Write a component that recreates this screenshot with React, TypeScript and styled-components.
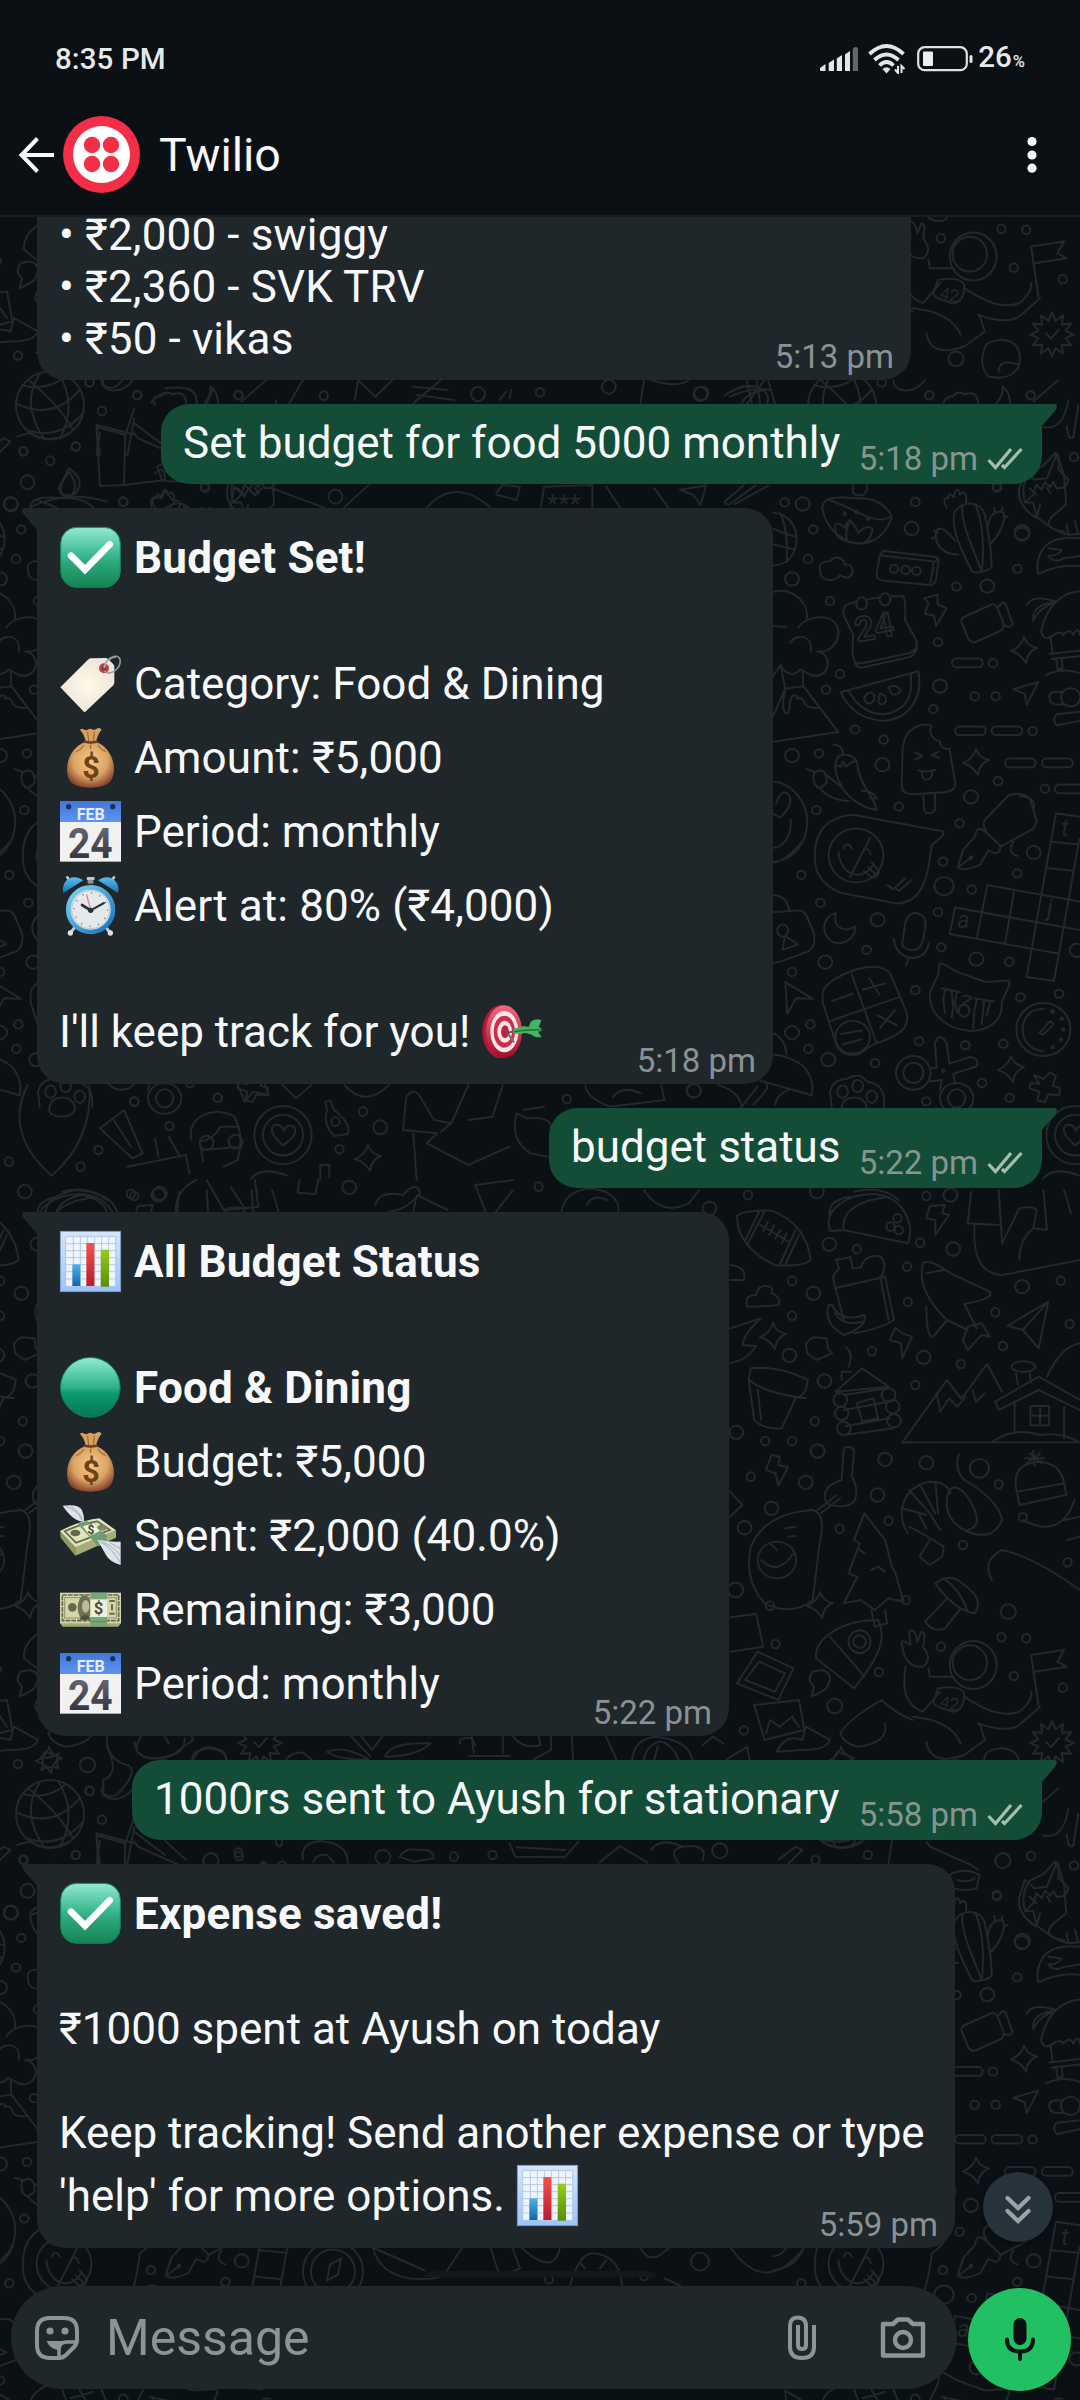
import React from 'react';
import styled, { createGlobalStyle } from 'styled-components';

const C = {
  bg: '#0b1014',
  bubble: '#1f272a',
  sent: '#144d37',
  text: '#f7f8fa',
  muted: '#8b9295',
  doodle: '#22282c',
  green: '#21c063',
};

const GlobalStyle = createGlobalStyle`
  html, body { margin: 0; padding: 0; background: ${C.bg}; }
  * { box-sizing: border-box; }
  text { font-family: Roboto, "Noto Sans", sans-serif; }
`;

const Screen = styled.div`
  position: relative;
  width: 1080px;
  height: 2400px;
  overflow: hidden;
  display: flex;
  flex-direction: column;
  background: ${C.bg};
  color: ${C.text};
  font-family: Roboto, "Noto Sans", sans-serif;
`;

const WallpaperSvg = styled.svg`
  position: absolute;
  inset: 0;
  width: 1080px;
  height: 2400px;
`;

const Top = styled.header`
  position: relative;
  flex: none;
  height: 217px;
  background: ${C.bg};
  border-bottom: 2px solid #171d21;
`;

const StatusBar = styled.div`
  display: flex;
  align-items: center;
  justify-content: space-between;
  height: 92px;
  padding: 25px 55px 0 55px;
  font-size: 29.5px;
  font-weight: 500;
  color: #e6e9ea;
`;

const Clock = styled.span`
  letter-spacing: 0.1px;
`;

const StatusIcons = styled.div`
  display: flex;
  align-items: center;
  gap: 10.5px;
`;

const Percent = styled.span`
  margin: 2px 0 0 -5px;
  line-height: 34px;
`;

const PercentSign = styled.small`
  margin-left: 1px;
  font-size: 16.5px;
`;

const AppBar = styled.div`
  display: flex;
  align-items: center;
  height: 125px;
  padding: 0 18px 0 18px;
`;

const Avatar = styled.svg`
  margin-left: 7px;
  flex: none;
`;

const Title = styled.h1`
  flex: 1;
  margin: 0 0 0 19px;
  font-size: 46.5px;
  font-weight: 400;
  line-height: 54px;
`;

const Chat = styled.main`
  position: relative;
  flex: 1;
  min-height: 0;
  overflow: hidden;
  display: flex;
  flex-direction: column;
  justify-content: flex-end;
  gap: 24px;
  padding: 0 38px 38px 37px;
`;

const Received = styled.section<{ $w: number; $continued?: boolean }>`
  position: relative;
  flex: none;
  display: flex;
  flex-direction: column;
  width: ${(p) => p.$w}px;
  padding: ${(p) => (p.$continued ? 0 : 13)}px 17px 4px 22px;
  background: ${C.bubble};
  border-radius: ${(p) => (p.$continued ? '0 0 28px 28px' : '0 28px 28px 28px')};
`;

const Sent = styled.section<{ $w: number }>`
  position: relative;
  flex: none;
  align-self: flex-end;
  display: flex;
  align-items: flex-end;
  justify-content: space-between;
  width: ${(p) => p.$w}px;
  height: 80px;
  padding: 13px 19px 15px 22px;
  background: ${C.sent};
  border-radius: 28px 0 28px 28px;
`;

const Tail = styled.svg<{ $side: 'left' | 'right' }>`
  position: absolute;
  top: 0;
  ${(p) => p.$side}: -15px;
  ${(p) => (p.$side === 'right' ? 'transform: scaleX(-1);' : '')}
`;

const Line = styled.div<{ $tall?: boolean; $bold?: boolean; $track?: number }>`
  height: ${(p) => (p.$tall ? 74 : 52)}px;
  font-size: 44px;
  line-height: ${(p) => (p.$tall ? 74 : 52)}px;
  font-weight: ${(p) => (p.$bold ? 700 : 400)};
  letter-spacing: ${(p) => p.$track ?? (p.$bold ? 0.16 : 0)}px;
  white-space: pre;
`;

const TopLine = styled(Line)`
  height: 44px;
  line-height: 36px;
`;

const Time = styled.time`
  align-self: flex-end;
  margin-top: -27px;
  font-size: 33px;
  line-height: 38px;
  color: ${C.muted};
`;

const Meta = styled.div`
  display: flex;
  align-items: center;
  gap: 9px;
  height: 38px;
  margin-bottom: -9px;
  font-size: 33px;
  line-height: 38px;
  color: #87958f;
`;

const EmojiBox = styled.svg`
  display: inline-block;
  width: 61px;
  height: 61px;
  margin: 0 2px 0 1px;
  vertical-align: -15px;
  overflow: visible;
`;

const DatePeek = styled.div`
  position: absolute;
  left: 424px;
  bottom: 9px;
  width: 232px;
  height: 6px;
  border-radius: 14px 14px 0 0 / 6px 6px 0 0;
  background: #12181b;
`;

const ScrollDown = styled.button`
  position: absolute;
  right: 27px;
  bottom: 44px;
  display: flex;
  align-items: center;
  justify-content: center;
  width: 70px;
  height: 70px;
  padding: 3px 0 0;
  border: 0;
  border-radius: 50%;
  background: #27333a;
  box-shadow: 0 2px 4px rgba(0, 0, 0, 0.4);
`;

const Composer = styled.footer`
  position: relative;
  flex: none;
  display: flex;
  align-items: flex-start;
  gap: 11px;
  height: 114px;
  padding: 0 9px 0 11px;
`;

const Field = styled.div`
  flex: 1;
  display: flex;
  align-items: center;
  height: 103px;
  padding: 1px 30px 0 22px;
  border-radius: 52px;
  background: ${C.bubble};
  color: #8b9598;
`;

const Placeholder = styled.span`
  flex: 1;
  margin-left: 25px;
  font-size: 50px;
  line-height: 58px;
`;

const Clip = styled.svg`
  margin-right: 61px;
`;

const MicButton = styled.button`
  flex: none;
  display: flex;
  align-items: center;
  justify-content: center;
  width: 103px;
  height: 103px;
  margin-top: 2px;
  padding: 0;
  border: 0;
  border-radius: 50%;
  background: ${C.green};
`;

/* ---------- wallpaper ---------- */

type Dot = [number, number];

const Dots = ({ at, rx, ry }: { at: Dot[]; rx: number; ry: number }) => (
  <>
    {at.map(([x, y]) => (
      <ellipse key={`${x}-${y}`} cx={x} cy={y} rx={rx} ry={ry} />
    ))}
  </>
);

const Spark = ({ x, y }: { x: number; y: number }) => (
  <path
    d={`M${x} ${y - 13}Q${x + 3} ${y - 4} ${x + 13} ${y - 2}Q${x + 3} ${y + 2} ${x + 2} ${y + 13}Q${x - 3} ${y + 4} ${x - 13} ${y + 1}Q${x - 3} ${y - 3} ${x} ${y - 13}Z`}
  />
);

const burst = (cx: number, cy: number) =>
  Array.from({ length: 24 }, (_, i) => {
    const r = i % 2 ? 14 : 22;
    const a = (i * Math.PI) / 12;
    return `${(cx + r * Math.cos(a)).toFixed(1)},${(cy + r * Math.sin(a)).toFixed(1)}`;
  }).join(' ');

const EAST = [
  'M427 250C427 225 500 230 532 232C600 228 640 262 634 272C610 315 560 325 510 318C450 300 430 270 427 250ZM438 234C500 240 580 290 632 268M468 300C460 280 470 275 495 290C500 280 510 270 515 278C525 285 535 300 535 300C560 280 580 290 577 295C570 320 540 325 515 318C490 315 470 310 468 300M500 312C495 295 505 280 515 278',
  'M518 215C518 200 535 190 543 180C560 195 570 215 550 225C530 228 518 225 518 215Z',
  'M420 372C415 355 440 355 452 355C460 345 490 345 495 362C520 360 525 380 505 387C490 388 480 382 480 382C470 395 435 395 425 385C418 380 420 375 420 372Z',
  'M822 262C840 235 905 235 915 265C925 300 935 330 935 365Q933 372 905 376Q880 380 875 374C850 340 815 300 822 262ZM848 246C840 280 880 330 905 376M885 243C905 270 915 320 905 376M835 342C790 342 765 325 767 300C775 285 790 288 826 315M922 290C930 260 950 255 970 260C980 280 950 310 930 322M800 250C785 232 800 228 805 232C805 218 815 225 822 230C825 210 838 212 840 225C850 215 862 222 858 240M755 310L770 308M762 295L772 300M945 258L942 250M965 258L967 250M983 268L972 268',
  'M612 335L770 347Q778 349 775 358L768 392Q763 402 750 402L605 393Q588 390 590 378L598 350Q600 338 612 335ZM602 344L755 355Q762 356 760 365L750 400M760 358L775 350',
  'M530 434L500 440Q485 450 492 462L520 500Q515 540 522 548Q525 557 545 555L690 535Q712 530 710 515L705 505L675 470Q678 430 670 424L635 424M562 430L600 426M522 548Q530 568 550 563L690 543Q715 535 710 515',
  'M733 428L772 421L773 440L800 447L768 482L762 462L735 458L745 437Z',
  'M850 465L935 440Q945 437 952 447L970 475Q972 490 960 492L885 514Q870 516 862 503L845 475Q843 467 850 465ZM952 447L968 436Q978 437 980 445L998 478Q990 488 970 480',
  'M1040 442C1050 425 1090 425 1130 435C1100 440 1070 455 1060 472C1055 450 1080 438 1130 435M1085 490C1100 440 1150 415 1200 414M1082 490Q1090 515 1120 500Q1140 490 1150 500Q1170 485 1180 500Q1195 480 1200 500M1112 505L1118 537M1108 537L1200 530M1115 547L1200 541M1128 546L1133 567L1148 565L1145 545M1098 578Q1150 562 1200 575',
  'M482 612L715 571C730 620 690 665 610 668C550 665 510 650 482 612ZM505 608C530 640 570 655 610 655C680 650 700 620 692 576',
  'M553 622Q570 605 583 618Q585 634 565 634Q550 630 553 622ZM600 614Q622 618 618 630Q605 642 595 630ZM625 602Q650 595 662 609Q650 620 635 615Z',
  'M1000 606L1075 592L1040 636L1034 615ZM316 1180L398 1213L348 1212L322 1242ZM0 215L78 207L62 245L40 225Z',
  'M135 238L190 207M150 243L225 207M135 238Q135 245 150 243M165 243L265 207',
  'M1148 612Q1105 608 1108 622Q1110 640 1150 635M1200 650L1130 655Q1115 665 1130 677L1200 668',
  'M280 260C330 262 350 290 350 312C348 345 320 362 280 364M280 292L348 308M280 322L342 332M300 261Q325 290 320 357',
  'M280 415C340 405 390 440 380 470M280 482L318 484M355 486C370 465 460 450 475 490C478 515 450 535 412 532M330 515C350 495 400 500 392 532M412 532C450 535 455 570 420 578C400 583 385 575 360 567C345 580 315 580 302 558L280 580',
  'M302 558L315 605L280 658M315 605L370 600L475 690L280 709M370 600L368 570M315 607C300 650 320 665 328 645C330 610 350 615 352 625Q365 618 375 635Q385 645 418 642',
  'M460 715Q490 715 488 735M465 755Q470 735 488 735Q515 732 530 748L518 748L498 758L490 748L482 758L470 755M465 755C470 800 520 835 590 843C580 810 540 800 530 748M380 763L405 768M402 770Q440 755 440 790L420 800Q395 795 402 770M420 800C450 825 500 825 505 825M440 775L480 795M545 805Q580 805 590 820L570 820',
  'M665 795L668 720C675 680 730 670 755 678C745 690 755 705 780 708C780 720 795 725 808 722L826 790C826 805 810 808 790 808L700 812Q665 812 665 795ZM730 812L732 840Q735 852 755 848Q767 845 766 835L764 810M705 730L727 737L707 744M777 728L755 735L777 741M715 765Q740 770 765 764M725 768C725 790 757 788 757 767',
  'M405 940C400 880 450 855 520 852L775 883Q800 884 785 895L755 912C745 970 730 1025 650 1026L480 1005C430 990 405 970 405 940ZM475 925C485 980 560 980 580 948M490 918Q503 902 515 918M545 930Q560 908 572 930M552 962L575 975Q595 975 597 962L575 945M565 955L585 968M622 990L640 998L675 977M650 998L658 1001L694 980',
  'M833 955L850 920L885 895Q890 870 915 885L960 912Q965 925 945 928L925 922L900 950Q850 965 833 955ZM835 955L875 935M915 862L985 815Q1020 805 1050 820L1070 865L1060 880L960 915M915 862Q905 875 920 885M1020 815Q1070 820 1062 838M1000 905Q980 925 1012 933',
  'M1128 849L1200 856M1128 849L1040 1170L1122 1178L1198 900M1116 905L1192 910M1104 957L1180 962M922 990L1200 1022M922 990L890 1095M825 1034L1200 1078M825 1034L809 1086L1135 1124M1003 1000L975 1105',
  'M280 787C340 790 382 830 382 865C380 910 340 942 280 944M288 830Q305 800 325 812Q345 830 300 858L280 850M332 862C335 895 310 915 280 917',
  'M280 1043L350 1040Q370 1038 380 1050L402 1085Q408 1110 385 1120L300 1140L280 1142M280 1010Q320 1010 328 1041M315 1090L355 1106L308 1117Z',
  'M468 1045C420 1050 420 1100 475 1104C510 1104 527 1085 526 1070C500 1085 455 1075 468 1045Z',
  'M667 1105L675 1065Q685 1042 710 1045Q738 1048 737 1070L728 1100Q720 1120 690 1117Q667 1113 667 1105ZM641 1095C645 1125 680 1133 700 1133Q740 1130 746 1105M685 1133L678 1148',
  'M428 1200Q440 1175 530 1155C580 1145 625 1150 635 1170L680 1240C690 1270 660 1285 580 1302L540 1320Q490 1330 470 1305L428 1220ZM515 1165L590 1300M452 1256L655 1210M457 1217L518 1203M548 1195L615 1183M568 1172L598 1205M592 1245L650 1265M645 1235L600 1270M483 1282L545 1275M490 1302L545 1292',
  'M775 1165L778 1145L785 1143L832 1160L915 1180L985 1177Q992 1180 985 1190L965 1220C970 1255 930 1275 870 1276C790 1270 745 1240 750 1200ZM785 1192L840 1200M795 1195L790 1215L795 1240M815 1200L820 1230L815 1250M830 1200L825 1220L832 1240M885 1212L942 1218M890 1215L882 1240L880 1270M912 1217L905 1262M930 1220L920 1245M850 1208Q865 1203 875 1212L850 1222',
  'M1090 1233C1010 1230 1005 1312 1090 1316M1078 1280L1108 1258Q1122 1258 1118 1265L1090 1283Z',
  'M750 1350L770 1348L765 1300Q778 1275 800 1300L808 1340L870 1327Q900 1330 890 1345L820 1360L825 1380M750 1375L785 1372L780 1392',
  'M1062 1362L1090 1370L1110 1357L1128 1365L1118 1383L1140 1388L1138 1402L1105 1400L1095 1415L1072 1412L1078 1395L1048 1388L1052 1378L1078 1380Z',
  'M455 1425L450 1395Q460 1370 500 1370Q540 1355 560 1375Q620 1380 612 1425M485 1425C490 1400 555 1400 560 1425C570 1450 470 1450 485 1425',
  'M280 1280Q315 1290 320 1322M240 1373L395 1402Q405 1370 370 1345Q330 1325 280 1322M240 1373C290 1380 240 1405 220 1420M330 1390Q290 1400 285 1420M115 1382Q180 1395 185 1425',
  'M1035 240Q1020 205 1050 180L1090 168L1125 143Q1140 160 1135 175L1165 195Q1160 215 1130 212L1120 200L1110 210L1095 200L1085 215L1070 205L1060 225L1035 240L1060 240L1070 268C1120 295 1160 310 1200 300M1160 283L1165 303M1185 277L1195 303',
  'M1075 380Q1065 355 1090 330Q1120 305 1200 310M1075 380Q1140 360 1200 365M1105 330L1145 333Q1135 345 1105 345Q1120 360 1150 350L1200 345',
  'M1090 92Q1150 100 1165 40M1160 90Q1165 120 1180 112L1195 50M1060 42L1135 0',
  'M1185 1500Q1140 1475 1155 1462Q1180 1455 1188 1472Q1200 1455 1220 1465Q1230 1480 1185 1500Z',
  'M1090 1565Q1120 1540 1200 1560',
  'M640 0C640 25 700 30 735 0M790 45Q800 30 820 32Q830 20 855 28Q890 20 895 45M950 45Q970 30 968 12Q990 25 990 45',
  'M135 30Q200 0 250 20Q200 25 185 45M230 0L240 45M200 0L215 45M250 20Q270 30 262 45',
];

const SOUTH = [
  'M1070 108Q1080 90 1120 92Q1170 130 1177 240Q1165 262 1125 255Q1070 200 1070 108ZM1082 180L1102 96M1086 190L1110 95M1132 255L1155 150M1140 255L1160 165M1104 135L1145 185M1115 125L1108 155M1124 135L1117 165M1133 150L1126 175M1142 160L1135 190',
  'M1205 150C1195 90 1230 40 1270 42C1310 50 1330 130 1318 190L1225 150Q1200 155 1205 150M1225 150C1220 90 1250 60 1290 50M1205 110Q1200 60 1235 50M1240 35Q1280 15 1305 60',
  'M1350 78L1372 75L1368 100L1378 105L1358 165L1358 120L1345 115Z',
  'M1300 443L1310 460L1324 470L1310 535L1308 490L1292 480Z',
  'M1120 825L1132 830L1130 855L1144 862L1130 917L1126 880L1112 870Z',
  'M1213 240L1235 232L1238 265M1215 245L1218 268Q1208 285 1210 300L1225 420M1212 325L1285 290L1298 420Q1280 445 1240 460M1278 290L1290 420M1240 265L1250 262Q1255 225 1275 228Q1290 240 1280 290M1203 375L1208 375Q1220 430 1255 405Q1260 440 1225 465Q1195 430 1203 375ZM1212 400Q1225 440 1252 425',
  'M1340 250Q1350 235 1380 280L1437 335Q1445 355 1400 372L1418 445M1340 250Q1330 330 1375 420L1405 450M1375 420L1355 470Q1345 475 1345 380M1345 280L1370 270M1405 440L1398 480L1405 510L1425 465L1437 470L1425 430L1405 440',
  'M1522 365L1463 437L1485 450L1508 505ZM1522 365L1485 450',
  'M1405 130L1410 35M1450 30L1455 190L1480 85Q1505 75 1505 95L1500 145L1520 150M1405 130L1450 135M1415 135Q1410 280 1455 285L1568 240M1500 145Q1480 180 1480 240M1515 30L1520 150M1545 30L1555 100',
  'M1170 490L1180 472L1200 475L1202 505L1208 520L1185 540L1172 520Z',
  'M1060 445L1105 415Q1080 460 1078 495L1098 498Q1085 540 1060 550',
  'M1090 565Q1130 555 1173 600Q1170 650 1155 655L1135 745Q1110 750 1095 720L1087 600ZM1088 600Q1110 640 1170 655M1100 630L1105 720',
  'M1213 635L1252 565L1290 620ZM1222 600L1222 575L1235 575M1228 502Q1240 520 1232 560M1225 645L1290 625M1225 690L1290 665M1228 738L1292 715M1225 765L1298 745M1244 670L1268 655L1275 715L1252 725Z',
  'M1310 787L1568 787M1310 787L1375 600L1395 655L1402 640M1360 640L1365 695L1378 655L1390 680L1402 650M1402 640L1433 552L1455 635M1412 630L1417 665L1430 640M1445 665L1508 590L1568 660M1450 690L1508 630L1568 690M1445 665L1450 690M1473 665L1473 755M1545 680L1545 775M1440 787Q1470 740 1510 765Q1540 755 1568 787M1478 615L1475 580M1497 605L1495 580M1510 680L1510 735M1496 707L1523 707M1520 590Q1540 500 1568 490',
  'M1475 920Q1470 850 1510 845Q1540 850 1545 910L1548 945L1480 975ZM1476 935L1546 910M1490 850L1510 820M1512 850L1495 820M1488 835L1516 835M1500 812L1502 858',
  'M1392 823Q1385 870 1400 900Q1450 960 1455 1020Q1440 1090 1400 1050Q1365 1010 1378 930Q1395 900 1415 990Q1425 1040 1405 1050',
  'M1318 1060C1300 1000 1310 920 1350 905Q1375 905 1380 940M1320 930L1350 1000M1335 912L1358 1000M1358 905L1362 1000M1310 985L1345 1005M1335 1005L1345 1045M1350 1000L1365 1050M1320 1040Q1340 1060 1370 1100L1368 1130L1350 1155L1335 1130L1350 1080',
  'M1225 805Q1235 795 1240 810L1237 890Q1248 930 1240 965Q1225 990 1200 970Q1190 920 1222 900Z',
  'M1187 990L1215 945M1192 1000L1220 955M1180 990Q1200 1000 1190 1090L1180 1260Q1150 1310 1110 1270Q1080 1200 1090 1100Q1110 1000 1180 990M1105 1140Q1130 1190 1152 1120M1118 1090L1128 1110M1140 1045L1155 1040M1145 1070L1155 1068',
  'M1255 1000L1240 1080L1248 1090L1232 1180L1245 1190L1225 1270L1250 1260L1270 1290L1290 1255L1312 1265L1300 1180L1295 1160L1285 1080ZM1265 1290L1270 1340L1288 1330L1285 1290M1245 1105L1255 1120M1265 1170L1275 1160L1285 1175',
  'M1440 1200Q1425 1140 1455 1110Q1500 1130 1568 1230M1545 1020L1568 1010M1550 1080L1568 1070M1485 1020Q1540 1080 1560 960',
  'M1060 935L1078 975L1060 1010M1060 255Q1085 260 1080 300L1060 300',
  'M1085 380Q1080 345 1098 345Q1100 315 1112 318Q1125 320 1120 340Q1135 350 1130 375Q1110 380 1085 380Z',
  'M66 95Q70 45 110 30Q160 35 170 95M82 95Q90 55 120 45Q150 60 155 95M255 95Q255 30 285 0M300 0L325 90L355 85L335 20M355 85L375 80L370 0M435 0L432 38L458 42L462 0M545 75Q550 30 585 45Q605 0 610 40Q590 90 565 95M600 95L605 45L650 90M690 15L745 0M690 15L705 95M745 30L720 95M815 95Q820 30 860 25Q900 40 898 95M852 75Q860 40 882 60M935 30Q960 110 1000 70L1015 30',
];

const SOUTH2 = [
  'M1185 295C1180 240 1220 180 1275 180C1290 240 1270 310 1240 385ZM1205 230L1255 350M1180 335Q1205 320 1205 360L1200 385Q1190 400 1178 410L1182 380Q1170 360 1180 335Z',
  'M1358 70Q1380 35 1400 75Q1430 120 1415 160Q1385 150 1358 70ZM1370 55Q1395 90 1405 155M1395 145L1372 205Q1355 220 1343 185L1375 115',
  'M1060 172L1098 162L1108 260L1060 275M1100 275L1152 325L1130 420L1070 370ZM1102 305L1140 340L1125 395L1082 360ZM1095 435L1160 420L1168 510L1110 540ZM1112 520L1118 480L1132 500L1150 470L1160 500',
  'M1310 260Q1305 230 1322 255L1320 215Q1328 200 1332 245L1338 215Q1345 215 1340 260Q1355 300 1340 320Q1315 325 1310 260ZM1315 320Q1305 430 1340 455L1365 395M1348 325L1350 350L1385 350',
  'M1362 385Q1395 375 1400 400Q1400 450 1385 455Q1355 440 1355 425Z',
  'M1497 285L1545 270L1535 305L1548 320L1502 335M1497 285L1508 440',
  'M1400 410Q1450 480 1480 455Q1500 420 1497 395M1420 490Q1460 520 1480 495L1510 440M1325 480Q1300 460 1280 420Q1230 480 1220 520Q1225 550 1245 560Q1290 550 1285 490M1325 470Q1380 480 1395 550M1345 545Q1350 620 1400 585L1430 540L1422 490M1128 575Q1140 520 1165 540L1170 500L1205 540Q1200 570 1165 570Z',
  'M1430 590Q1430 570 1455 565Q1485 570 1480 640Q1470 690 1435 675Q1420 640 1430 590ZM1450 660Q1450 620 1480 640',
  'M25 855L50 840',
  'M205 530Q185 590 225 595Q270 590 268 535M155 530Q155 600 185 615Q200 630 180 680Q165 725 150 700L150 660Q175 640 155 560M60 590Q70 600 85 580Q80 600 85 625Q70 615 60 630Q65 605 60 590ZM280 598Q290 560 305 562Q330 570 328 598M415 598Q425 575 440 578L452 598M475 575Q500 555 535 598Q490 600 475 575ZM510 530L538 590M525 530L540 570L555 530M560 585Q570 545 625 550Q605 590 560 590ZM668 550Q665 530 685 535L690 555M685 530L688 580M680 588L740 588M730 530L730 580M745 530Q760 570 785 555L782 530M800 530L800 570L775 598M830 530L832 598M880 530L895 598M918 598Q920 540 950 530Q1000 540 1005 598M935 598Q940 550 958 545M950 598L955 560M985 598Q975 550 960 545M1020 555L1035 530L1050 550M1055 598L1085 560L1088 598M1210 598L1215 575L1235 590',
  'M440 898Q435 850 465 843Q505 850 505 908M455 905Q460 880 475 885L485 908M740 850L748 890L820 892L840 845M750 862L820 870M870 908L900 858L940 908M945 870Q960 830 990 860Q1030 850 1020 900M985 908Q970 870 990 860M1130 900L1155 860L1165 870L1145 910M1195 845Q1220 880 1250 845M1295 843L1290 910M1345 845L1350 860L1410 915L1420 930M240 843L270 900M580 890Q590 860 605 870Q630 865 630 895L600 905Z',
  'M1480 1010L1488 960L1502 985L1520 980L1535 905L1545 975L1548 1060L1530 1090Q1510 1130 1545 1140M1480 1010Q1475 1060 1505 1100L1510 1060M1495 1010L1505 1030M1525 1025L1520 1010',
  'M1378 945Q1400 920 1422 945L1418 985Q1400 995 1385 985ZM1390 960Q1405 970 1415 955',
  'M140 820L145 910M140 820L195 850M195 800L185 910',
];

const NORTH = [
  'M240 25Q290 10 285 75M225 75Q215 50 245 38M300 70L310 25M420 70L440 0M515 60L520 0L545 50L570 0M600 70L640 0M605 45L660 60M600 20L650 30M690 70M725 60L735 35M740 55L742 30M930 70L935 0M945 0Q985 25 1000 0M1060 50Q1090 20 1120 30M1085 70L1110 0M1125 70L1115 0',
  'M140 140L182 165L180 315L145 318ZM182 165L195 85M180 315L240 300M195 130L240 200M225 280Q240 250 240 305M85 325L100 265Q125 300 110 340Q90 360 85 325ZM45 380Q100 330 155 365M335 380L340 320L355 350L360 325L370 345L380 325M395 325L470 382M500 382L535 315M620 382Q660 290 712 382M720 340L730 315L755 320L750 360L722 345M785 382L790 320L860 315L860 382M880 320L900 382M950 325L970 382M220 382Q215 340 235 355L240 330L250 360Q265 360 260 382',
];

const WEST = [
  'M40 915Q5 1060 75 1187Q135 1080 130 915',
  'M145 1045L180 990L207 1120L192 1135ZM165 1020L190 1100',
  'M278 1080C270 1010 310 975 340 1010Q355 1060 345 1140L325 1160M290 1085L295 1145M295 1110L350 1100M290 1085Q310 1080 320 1040L345 1040M345 915L355 965L368 935L390 945L385 915M410 915L430 955L452 915',
  'M472 965L480 962L485 990Q510 1030 505 1062L485 1068Q468 1030 475 990Z',
  'M500 915Q530 985 565 915M585 1050L590 950Q600 920 610 950L630 1020L655 1030L680 915M585 1050L635 1060L620 1090L680 1155L740 1100M680 1020L715 1010L730 915M600 1060L605 1200M655 1030L640 1055M750 1000L765 1015Q800 1010 800 1040M750 1000Q740 1080 770 1120L795 1130M760 990L790 980M185 1160L270 1125L275 1180M225 1075L230 1130M245 1070L260 1125M465 1200L465 1155L478 1155L478 1190M850 915Q850 950 885 980L965 960L960 915M890 950Q905 915 930 940M1075 985L1100 920',
];

const Wallpaper = () => (
  <WallpaperSvg viewBox="0 0 1080 2400" fill="none" stroke={C.doodle} strokeWidth="2" strokeLinejoin="round" strokeLinecap="round">
    <defs>
      <style>{'#doodles path,#doodles ellipse,#doodles rect{vector-effect:non-scaling-stroke}'}</style>
      <g id="doodles">
        <g transform="translate(680 380) scale(.33333 .5102)">
          {EAST.map((d) => <path key={d} d={d} />)}
          <Dots rx={13} ry={8} at={[[314,240],[400,293],[384,351],[706,239],[829,405],[1012,370],[951,211],[450,433],[480,576],[438,607],[774,514],[760,645],[884,620],[947,620],[939,555],[525,685],[611,705],[417,732],[409,843],[656,836],[839,869],[954,786],[1095,801],[1058,688],[364,970],[789,944],[875,999],[1012,967],[421,1025],[774,1043],[560,1117],[784,1112],[988,1140],[336,1160],[706,1196],[1021,1210],[1137,1203],[391,1263],[385,1311],[585,1339],[717,1296],[856,1304],[970,1301],[906,1378],[989,1407],[739,1414],[748,30],[1052,30],[605,5],[1182,151],[642,370],[677,372],[709,374]]} />
          <Dots rx={21} ry={13} at={[[368,243],[336,390],[695,291],[1026,302],[922,404],[780,600],[336,736],[607,754],[873,817],[1061,926],[593,1058],[436,1141],[889,1135],[336,1279],[445,1332],[64,26],[42,1393],[1190,1118]]} />
          <Dots rx={29} ry={18} at={[[792,992],[1172,622]]} />
          <Dots rx={16} ry={12} at={[[545,438],[615,430],[308,1079],[852,1236],[488,1395],[533,1384],[575,1405]]} />
          <Dots rx={4} ry={2.5} at={[[494,262],[530,259],[564,272],[790,1354],[1118,1238],[1145,1252],[1150,1273],[1143,1293],[1118,1308],[873,936]]} />
          <ellipse cx="528" cy="932" rx="82" ry="53" />
          <ellipse cx="518" cy="1288" rx="52" ry="32" />
          <ellipse cx="1090" cy="1273" rx="81" ry="52" />
          <ellipse cx="700" cy="1358" rx="52" ry="33" />
          <ellipse cx="700" cy="1358" rx="30" ry="20" />
          <ellipse cx="830" cy="1408" rx="50" ry="30" />
          <ellipse cx="830" cy="1408" rx="26" ry="18" />
          <ellipse cx="1185" cy="1480" rx="86" ry="57" />
          <ellipse cx="1185" cy="1480" rx="60" ry="40" />
          {[[816,546],[825,679],[935,679],[975,742],[1086,742],[1125,793]].map(([x, y]) => (
            <rect key={`${x}${y}`} x={x} y={y} width="92" height="17" rx="13" ry="8.5" />
          ))}
        </g>
        <g transform="translate(0 1180) scale(.68876 .33333)">
          {SOUTH.map((d) => <path key={d} d={d} />)}
          <Dots rx={6} ry={13} at={[[1086,45],[1345,48],[1336,188],[1244,207],[1150,302],[1317,260],[1318,366],[1445,397],[1150,407],[1266,514],[1395,552],[1456,498],[1553,432],[1540,302],[1329,615],[1183,724],[1111,783],[1150,783],[1090,890],[1450,913],[1290,1022],[1219,1046],[1398,1095],[1485,1012],[1550,1147],[190,42],[782,20],[1303,115],[1293,140],[1305,150]]} />
          <Dots rx={10} ry={20} at={[[1186,35],[1380,45],[1204,193],[1384,207],[1484,320],[1181,340],[1146,526],[1341,532],[1197,603],[1069,757],[1187,813],[1285,838],[1345,848],[1170,907],[1274,945],[1120,985],[1081,1043],[232,40],[507,22],[1030,85],[1220,660],[1222,700],[1225,745],[1290,645],[1296,680],[1298,722]]} />
          <ellipse cx="1422" cy="865" rx="14" ry="28" />
          <ellipse cx="1486" cy="560" rx="17" ry="16" />
          <ellipse cx="1128" cy="1140" rx="28" ry="55" />
          <rect x="1496" y="678" width="27" height="58" />
        </g>
        <g transform="translate(0 1560) scale(.68876 .33333)">
          {SOUTH2.map((d) => <path key={d} d={d} />)}
          <Dots rx={6} ry={13} at={[[1118,137],[1315,120],[1454,232],[1490,235],[1366,260],[1126,252],[1276,336],[1472,348],[1543,383],[1080,511],[26,612],[130,692],[346,878],[659,890],[715,885],[1184,900],[1260,885],[110,885],[1447,1005],[1497,888]]} />
          <Dots rx={11} ry={22} at={[[1464,155],[1212,438],[1068,90],[1388,622],[127,615],[556,892],[1045,872],[1456,902],[1484,1143]]} />
          <ellipse cx="1248" cy="245" rx="16" ry="34" />
          <ellipse cx="1248" cy="245" rx="9" ry="19" />
          <ellipse cx="1413" cy="315" rx="34" ry="72" />
          <ellipse cx="1408" cy="308" rx="25" ry="52" />
        </g>
        <g transform="translate(0 380) scale(.68876 .33333)">
          {NORTH.map((d) => <path key={d} d={d} />)}
          <Dots rx={6} ry={13} at={[[199,45],[346,45],[470,47],[784,37],[148,93],[34,213],[73,242],[179,365],[298,323]]} />
          <Dots rx={10} ry={21} at={[[40,307],[16,373],[487,350],[694,42],[884,20],[1017,42]]} />
        </g>
        <g transform="translate(0 780) scale(.68876 .33333)">
          {WEST.map((d) => <path key={d} d={d} />)}
          <Dots rx={6} ry={13} at={[[195,965],[316,953],[246,1038],[143,1110],[527,995],[493,1108],[117,1160],[13,1145],[823,957],[487,1025]]} />
          <Dots rx={10} ry={21} at={[[552,1042],[1007,932],[300,1088],[342,1085]]} />
        </g>
        <g>
          <circle cx="842" cy="1814" r="34" />
          <path d="M815 1794Q840 1800 858 1784M808 1812Q845 1830 872 1798M818 1838Q850 1850 875 1822M832 1782Q812 1812 836 1847M850 1781Q870 1812 852 1847M820 1788Q850 1812 865 1838" />
          <polygon points={burst(1052, 1743)} />
          <path d="M1046 1742L1051 1747L1059 1738" />
          <Spark x={1024} y={650} /><Spark x={976} y={762} /><Spark x={1011} y={1069} />
          <Spark x={773} y={1336} /><Spark x={820} y={1605} /><Spark x={368} y={1158} /><Spark x={841} y={1760} />
          <circle cx="333" cy="863" r="30" /><circle cx="333" cy="863" r="22" />
          <path d="M327 872L330 856L341 850L338 866ZM373 840Q380 865 410 870Q440 872 445 865L463 838M375 840L425 862M490 838L500 868L520 860L512 838M520 838Q555 870 560 838M570 877Q580 842 595 845Q620 848 622 877M640 838Q650 860 670 838M730 838Q765 890 805 838M665 870L680 877M850 877L870 838M580 854L585 860M606 852L600 860" />
          <circle cx="549" cy="871" r="4" /><circle cx="644" cy="868" r="4" /><circle cx="700" cy="853" r="9" />
          <text x="0" y="0" transform="translate(857 642) rotate(-10)" fontSize="34" fontWeight="700" strokeWidth="1.8">24</text>
          <text x="547" y="513" fontSize="26" stroke="none" fill={C.doodle}>***</text>
          <text transform="translate(939 1707) rotate(12)" fontSize="17" stroke="none" fill={C.doodle}>42</text>
        </g>
        <g stroke="none" fill={C.doodle} fontSize="24" fontStyle="italic">
          <text x="1061" y="836">t</text>
          <text x="1047" y="916">j</text>
          <text x="957" y="928">a</text>
        </g>
      </g>
    </defs>
    {[-1408.5, 0, 1408.5].map((y) =>
      [-792, 0].map((x) => <use key={`${x}${y}`} href="#doodles" x={x} y={y} />),
    )}
  </WallpaperSvg>
);

/* ---------- emoji ---------- */

const Check = () => (
  <EmojiBox viewBox="0 0 183 183">
    <defs>
      <linearGradient id="gCheck" x1="0" y1="0" x2="0" y2="1">
        <stop offset="0" stopColor="#93e9d2" /><stop offset=".45" stopColor="#3cb991" />
        <stop offset=".6" stopColor="#2aa67b" /><stop offset="1" stopColor="#168453" />
      </linearGradient>
    </defs>
    <rect x="2" y="1" width="179" height="180" rx="48" fill="url(#gCheck)" stroke="#14835c" strokeWidth="3" />
    <path d="M33 86L75 128L149 52" fill="none" stroke="#fff" strokeWidth="20" strokeLinecap="round" strokeLinejoin="miter" />
  </EmojiBox>
);

const TagEmoji = () => (
  <EmojiBox viewBox="0 0 183 183">
    <defs>
      <radialGradient id="gTag"><stop offset="0" stopColor="#fdfce6" /><stop offset="1" stopColor="#efe5da" /></radialGradient>
    </defs>
    <path d="M1 103L84 20Q88 16 94 16L136 15Q141 15 145 19L160 34Q163 37 163 42V88Q163 93 160 97L76 176Q73 179 70 175Z" fill="url(#gTag)" />
    <circle cx="132" cy="46" r="11" fill="#5b4a55" stroke="#c7403f" strokeWidth="8" />
    <path d="M132 46C134 26 152 9 169 10C186 13 183 36 170 49C158 62 140 64 133 54" fill="none" stroke="#8f9ba3" strokeWidth="4.5" />
    <path d="M134 42C140 24 156 13 168 13" fill="none" stroke="#d8dfe3" strokeWidth="2" />
  </EmojiBox>
);

const Bag = () => (
  <EmojiBox viewBox="0 0 183 183">
    <defs>
      <radialGradient id="gBag" cx=".5" cy=".4" r=".62">
        <stop offset="0" stopColor="#f3c983" /><stop offset=".6" stopColor="#dba562" /><stop offset="1" stopColor="#82412c" />
      </radialGradient>
    </defs>
    <path d="M60 9Q66 2 72 8L80 10Q90 1 99 9L108 7Q118 -1 125 8Q112 22 108 46H77Q74 22 60 9Z" fill="#d9a05c" />
    <path d="M83 14L86 44M103 14L100 44" stroke="#96602f" strokeWidth="3" />
    <path d="M76 45C40 58 21 92 21 128C22 164 38 181 91 182C144 181 160 164 162 128C162 92 143 58 109 45Z" fill="url(#gBag)" />
    <path d="M74 44Q92 49 111 44" stroke="#6e3d1c" strokeWidth="7" fill="none" strokeLinecap="round" />
    <path d="M72 55Q60 70 48 75M92 52V66M113 55Q124 68 137 74" stroke="#a86c3a" strokeWidth="4" fill="none" />
    <text x="93" y="152" textAnchor="middle" fontSize="92" fontWeight="700" fill="#70411a">$</text>
  </EmojiBox>
);

const CalendarEmoji = () => (
  <EmojiBox viewBox="0 0 183 183">
    <defs>
      <linearGradient id="gNum" x1="0" y1="0" x2="0" y2="1"><stop offset="0" stopColor="#75747f" /><stop offset="1" stopColor="#25242f" /></linearGradient>
      <linearGradient id="gBand" x1="0" y1="0" x2="0" y2="1"><stop offset="0" stopColor="#4377d8" /><stop offset="1" stopColor="#5d93ef" /></linearGradient>
    </defs>
    <rect width="183" height="183" fill="#f1f1f2" />
    <rect width="183" height="63" fill="url(#gBand)" />
    <path d="M0 181.500H183" stroke="#aaa" strokeWidth="3" />
    <circle cx="26" cy="17" r="8" fill="#17305f" /><circle cx="158" cy="17" r="8" fill="#17305f" />
    <text x="92" y="56" textAnchor="middle" fontSize="48" fontWeight="700" fill="#e4eeff" textLength="84" lengthAdjust="spacingAndGlyphs">FEB</text>
    <text x="91" y="171" textAnchor="middle" fontSize="130" fontWeight="700" fill="url(#gNum)" textLength="134" lengthAdjust="spacingAndGlyphs">24</text>
  </EmojiBox>
);

const Alarm = () => (
  <EmojiBox viewBox="0 0 183 183">
    <defs>
      <linearGradient id="gBell" x1="0" y1="0" x2="0" y2="1"><stop offset="0" stopColor="#5bbdec" /><stop offset="1" stopColor="#1673b5" /></linearGradient>
      <linearGradient id="gRim" x1="0" y1="0" x2="1" y2="1"><stop offset="0" stopColor="#7cd8f0" /><stop offset="1" stopColor="#1670bd" /></linearGradient>
    </defs>
    <path d="M46 155L31 174M136 155L151 174" stroke="#c8ccd0" strokeWidth="9" strokeLinecap="round" />
    <circle cx="31" cy="174" r="8" fill="#dfe2e5" /><circle cx="151" cy="174" r="8" fill="#dfe2e5" />
    <path d="M27 14L22 7M157 14L162 7" stroke="#c8ccd0" strokeWidth="8" strokeLinecap="round" />
    <path d="M83 26V10H100V26" fill="#8c9498" /><rect x="80" y="6" width="24" height="9" rx="3" fill="#c1c6c9" />
    <path d="M10 54C2 20 34 -8 70 16Z" fill="url(#gBell)" /><path d="M174 54C182 20 150 -8 114 16Z" fill="url(#gBell)" />
    <circle cx="92" cy="104" r="67" fill="#e6e9ea" stroke="url(#gRim)" strokeWidth="14" />
    <circle cx="92" cy="104" r="57" fill="none" stroke="#bfc6c9" strokeWidth="3" />
    <circle cx="92" cy="104" r="50" fill="none" stroke="#6f777b" strokeWidth="5" strokeDasharray="3 23.180" />
    <path d="M92 106L80 58" stroke="#e28384" strokeWidth="4" />
    <path d="M92 106L66 90" stroke="#28323b" strokeWidth="8" strokeLinecap="round" />
    <path d="M92 106L132 84" stroke="#28323b" strokeWidth="6" strokeLinecap="round" />
    <circle cx="92" cy="106" r="8" fill="#28323b" />
  </EmojiBox>
);

const Target = () => (
  <EmojiBox viewBox="0 0 183 183">
    <defs><linearGradient id="gT" x1="0" y1="0" x2="0" y2="1"><stop offset="0" stopColor="#f06a80" /><stop offset="1" stopColor="#a60c28" /></linearGradient></defs>
    <ellipse cx="58" cy="92" rx="57" ry="80" fill="#b3173a" />
    <ellipse cx="66" cy="92" rx="54" ry="79" fill="url(#gT)" />
    <ellipse cx="67" cy="92" rx="42" ry="62" fill="#f6e9ec" />
    <ellipse cx="67" cy="92" rx="32" ry="48" fill="#d42a4a" />
    <ellipse cx="68" cy="92" rx="22" ry="33" fill="#f6e9ec" />
    <ellipse cx="69" cy="92" rx="12" ry="19" fill="#c91d3e" />
    <path d="M78 98L96 124" stroke="#8a6a70" strokeWidth="7" />
    <path d="M72 97L130 82" stroke="#4b5a5e" strokeWidth="6" />
    <path d="M94 84Q120 72 140 78L146 62Q164 50 178 58L170 78L178 82V90L168 92L178 108Q160 112 146 100L130 96Q110 100 94 98Z" fill="#43b562" />
    <path d="M96 92Q130 86 176 86" stroke="#267b3c" strokeWidth="5" fill="none" />
  </EmojiBox>
);

const Chart = () => (
  <EmojiBox viewBox="0 0 183 183">
    <defs>
      <linearGradient id="gC" x1="0" y1="0" x2="0" y2="1"><stop offset="0" stopColor="#d5e3fb" /><stop offset=".3" stopColor="#c4dbfd" /><stop offset="1" stopColor="#9bc4fb" /></linearGradient>
      <linearGradient id="gB1" x1="0" y1="0" x2="0" y2="1"><stop offset="0" stopColor="#4bb2e6" /><stop offset="1" stopColor="#1565ac" /></linearGradient>
      <linearGradient id="gB2" x1="0" y1="0" x2="0" y2="1"><stop offset="0" stopColor="#f4524a" /><stop offset="1" stopColor="#bb1a31" /></linearGradient>
      <linearGradient id="gB3" x1="0" y1="0" x2="0" y2="1"><stop offset="0" stopColor="#98cd1e" /><stop offset="1" stopColor="#528f06" /></linearGradient>
    </defs>
    <rect x="1" y="1" width="181" height="181" fill="url(#gC)" stroke="#7f9cc5" strokeWidth="2.500" />
    <rect x="17" y="17" width="150" height="149" fill="#eff5fe" />
    <path d="M17 17H167V166H17ZM17 38H167M17 59H167M17 80H167M17 101H167M17 122H167M17 144H167M40 17V166M61 17V166M83 17V166M104 17V166M125 17V166M146 17V166" fill="none" stroke="#a9c2e0" strokeWidth="2.500" />
    <rect x="37" y="100" width="24" height="65" fill="url(#gB1)" />
    <rect x="79" y="36" width="24" height="129" fill="url(#gB2)" />
    <rect x="122" y="56" width="25" height="111" fill="url(#gB3)" />
  </EmojiBox>
);

const GreenDot = () => (
  <EmojiBox viewBox="0 0 183 183">
    <defs><linearGradient id="gDot" x1="0" y1="0" x2="0" y2="1"><stop offset="0" stopColor="#8feed3" /><stop offset=".5" stopColor="#2fb18a" /><stop offset=".6" stopColor="#0c9a71" /><stop offset="1" stopColor="#067454" /></linearGradient></defs>
    <circle cx="91" cy="91" r="89.500" fill="url(#gDot)" stroke="#0b8463" strokeWidth="3" />
  </EmojiBox>
);

const Wings = () => (
  <EmojiBox viewBox="0 0 183 183">
    <path d="M0 78L46 124V152L2 98Z" fill="#8d9a63" />
    <path d="M46 124L168 76V98L46 152Z" fill="#a4ae76" />
    <path d="M0 78Q60 46 118 40L168 76L46 126Z" fill="#e0e3bd" />
    <path d="M14 79Q62 56 112 49L150 75L48 113Z" fill="none" stroke="#5f6a48" strokeWidth="5" />
    <ellipse cx="46" cy="84" rx="15" ry="10" fill="#5f6a48" /><ellipse cx="126" cy="68" rx="14" ry="9" fill="#7f8964" />
    <path d="M52 56L82 48L140 90V118L112 124L100 108Z" fill="#6f9c72" />
    <path d="M68 64L98 56L120 78L90 92Z" fill="#eef0e2" />
    <text x="93" y="88" textAnchor="middle" fontSize="36" fontWeight="700" fill="#3f4a35">$</text>
    <path d="M8 2Q58 -4 66 16Q74 34 72 50Q40 50 8 2Z" fill="#dce4ea" /><path d="M16 4Q52 14 66 46M34 4Q58 20 68 42" stroke="#9fb0bd" strokeWidth="3" fill="none" />
    <path d="M112 104Q150 112 182 110L182 180Q150 172 138 150Z" fill="#dce4ea" /><path d="M118 108Q160 132 180 172M130 112Q160 124 180 150M150 114L180 130" stroke="#9fb0bd" strokeWidth="3" fill="none" />
  </EmojiBox>
);

const Banknote = () => (
  <EmojiBox viewBox="0 0 183 183">
    <path d="M0 132L8 143H175L183 132Z" fill="#a5a775" />
    <rect y="41" width="183" height="92" fill="#d3d6a8" />
    <rect x="7" y="48" width="169" height="77" fill="none" stroke="#66694a" strokeWidth="5" strokeDasharray="14 3" />
    <rect x="14" y="56" width="155" height="61" fill="none" stroke="#8f9269" strokeWidth="3" />
    <circle cx="37" cy="85" r="13" fill="#66694a" />
    <ellipse cx="74" cy="86" rx="21" ry="37" fill="#6d7055" /><ellipse cx="77" cy="82" rx="11" ry="19" fill="#b9bc96" /><path d="M58 122Q76 92 92 122Z" fill="#4d5040" />
    <rect x="91" y="41" width="50" height="101" fill="#78a57a" /><rect x="91" y="61" width="50" height="53" fill="#eceddd" />
    <path d="M91 128H141" stroke="#5d8a60" strokeWidth="3" />
    <text x="116" y="105" textAnchor="middle" fontSize="50" fontWeight="700" fill="#4c4f40">$</text>
    <path d="M148 66H164M148 104H164M156 76V94" stroke="#66694a" strokeWidth="6" />
  </EmojiBox>
);

/* ---------- interface icons ---------- */

const Signal = () => (
  <svg width="38" height="26" viewBox="0 0 38 26" fill="#e3e6e7">
    <path d="M0 22L5.500 18V25H1Q0 25 0 24ZM8.700 17L14 13.500V25H8.700ZM16.800 12.500L22 9V25H16.800ZM25 8.500L30 5V25H25Z" />
    <path d="M32.800 4Q33 1 36 1Q38 1 38 3V25H32.800Z" fill="#626668" />
  </svg>
);

const Wifi = () => (
  <svg width="38" height="30" viewBox="0 0 38 30" fill="none" stroke="#e3e6e7" strokeWidth="3.800">
    <path d="M1.500 10Q18.500 -6 35.500 10M6.500 16Q18.500 5 30.500 16M11.500 21.500Q18.500 14.500 25.500 21.500" />
    <path d="M14.500 25Q18.500 21.500 22.500 25L18.500 29.500Z" fill="#e3e6e7" stroke="none" />
    <path d="M30 22V29L27 25.500M33.500 29V22L36.500 25" strokeWidth="2" />
  </svg>
);

const Battery = () => (
  <svg width="56" height="26" viewBox="0 0 56 26">
    <rect x="1.200" y="1.200" width="48.600" height="23" rx="6.500" fill="none" stroke="#dfe2e3" strokeWidth="2.200" />
    <rect x="6" y="5.500" width="10" height="14.500" rx="1" fill="#eceeee" />
    <rect x="52.500" y="9" width="3" height="8" rx="1.500" fill="#dfe2e3" />
  </svg>
);

const Ticks = () => (
  <svg width="36" height="24" viewBox="0 0 36 24" fill="none" stroke="#a2bfb0" strokeWidth="3.200">
    <path d="M1.500 13L8.500 20.500L24 2M15 18L17.500 20.500L34.500 2" />
  </svg>
);

const TailShape = ({ side, color }: { side: 'left' | 'right'; color: string }) => (
  <Tail $side={side} width="16" height="23" viewBox="0 0 16 23">
    <path d="M16 0H3Q-1 0 .5 4Q1 6 3 8L15 22H16Z" fill={color} />
  </Tail>
);

const Incoming = ({ w, time, continued, children }: { w: number; time: string; continued?: boolean; children: React.ReactNode }) => (
  <Received $w={w} $continued={continued}>
    {!continued && <TailShape side="left" color={C.bubble} />}
    {children}
    <Time>{time}</Time>
  </Received>
);

const Outgoing = ({ w, time, text }: { w: number; time: string; text: string }) => (
  <Sent $w={w}>
    <TailShape side="right" color={C.sent} />
    <Line>{text}</Line>
    <Meta>
      <span>{time}</span>
      <Ticks />
    </Meta>
  </Sent>
);

export default function App() {
  return (
    <Screen>
      <GlobalStyle />
      <Wallpaper />
      <Top>
        <StatusBar>
          <Clock>8:35 PM</Clock>
          <StatusIcons>
            <Signal />
            <Wifi />
            <Battery />
            <Percent>26<PercentSign>%</PercentSign></Percent>
          </StatusIcons>
        </StatusBar>
        <AppBar>
          <svg width="38" height="38" viewBox="0 0 38 38" fill="none" stroke="#f7f8fa" strokeWidth="4">
            <path d="M19.500 2.500L3.500 19L19.500 35.500M4 19H36" />
          </svg>
          <Avatar width="77" height="77" viewBox="0 0 77 77">
            <circle cx="38.500" cy="38.500" r="38.500" fill="#f22f46" />
            <circle cx="38.500" cy="38.500" r="28.500" fill="#fff" />
            <g fill="#f22f46">
              <circle cx="29" cy="29" r="8.200" /><circle cx="48" cy="29" r="8.200" />
              <circle cx="29" cy="48" r="8.200" /><circle cx="48" cy="48" r="8.200" />
            </g>
          </Avatar>
          <Title>Twilio</Title>
          <svg width="60" height="40" viewBox="0 0 60 40" fill="#f7f8fa">
            <circle cx="30" cy="6.500" r="4.600" /><circle cx="30" cy="20" r="4.600" /><circle cx="30" cy="33.200" r="4.600" />
          </svg>
        </AppBar>
      </Top>

      <Chat>
        <Incoming w={874} time="5:13 pm" continued>
          <TopLine $track={0.15}>• ₹2,000 - swiggy</TopLine>
          <Line $track={0.15}>• ₹2,360 - SVK TRV</Line>
          <Line $track={0.12}>• ₹50 - vikas</Line>
        </Incoming>
        <Outgoing w={881} time="5:18 pm" text="Set budget for food 5000 monthly" />
        <Incoming w={736} time="5:18 pm">
          <Line $tall $bold><Check /> Budget Set!</Line>
          <Line />
          <Line $tall $track={0.05}><TagEmoji /> Category: Food &amp; Dining</Line>
          <Line $tall $track={0.12}><Bag /> Amount: ₹5,000</Line>
          <Line $tall><CalendarEmoji /> Period: monthly</Line>
          <Line $tall $track={0.12}><Alarm /> Alert at: 80% (₹4,000)</Line>
          <Line />
          <Line $tall $track={-0.04}>I'll keep track for you! <Target /></Line>
        </Incoming>
        <Outgoing w={493} time="5:22 pm" text="budget status" />
        <Incoming w={692} time="5:22 pm">
          <Line $tall $bold><Chart /> All Budget Status</Line>
          <Line />
          <Line $tall $bold><GreenDot /> Food &amp; Dining</Line>
          <Line $tall $track={0.12}><Bag /> Budget: ₹5,000</Line>
          <Line $tall $track={0.12}><Wings /> Spent: ₹2,000 (40.0%)</Line>
          <Line $tall $track={0.12}><Banknote /> Remaining: ₹3,000</Line>
          <Line $tall><CalendarEmoji /> Period: monthly</Line>
        </Incoming>
        <Outgoing w={910} time="5:58 pm" text="1000rs sent to Ayush for stationary" />
        <Incoming w={918} time="5:59 pm">
          <Line $tall $bold><Check /> Expense saved!</Line>
          <Line />
          <Line>₹1000 spent at Ayush on today</Line>
          <Line />
          <Line $track={-0.06}>Keep tracking! Send another expense or type</Line>
          <Line $tall>'help' for more options. <Chart /></Line>
        </Incoming>
        <DatePeek />
        <ScrollDown aria-label="Scroll to latest">
          <svg width="26" height="30" viewBox="0 0 26 30" fill="none" stroke="#9aa3a8" strokeWidth="4.200" strokeLinecap="round">
            <path d="M2.500 4L13 14L23.500 4M2.500 17L13 27L23.500 17" />
          </svg>
        </ScrollDown>
      </Chat>

      <Composer>
        <Field>
          <svg width="48" height="48" viewBox="0 0 48 48" fill="none" stroke="currentColor" strokeWidth="4">
            <path d="M17 4H31Q44 4 44 17V26Q44 30 41 33L33 41Q30 44 26 44H17Q4 44 4 31V17Q4 4 17 4Z" />
            <path d="M26 43V36Q26 28 34 28H44" strokeWidth="3.500" />
            <circle cx="17" cy="17" r="3.600" fill="currentColor" stroke="none" />
            <circle cx="32" cy="17" r="3.600" fill="currentColor" stroke="none" />
            <path d="M13.500 27H34Q27 29 25 36Q17 35 13.500 27Z" fill="currentColor" stroke="none" />
          </svg>
          <Placeholder>Message</Placeholder>
          <Clip width="32" height="48" viewBox="0 0 32 48" fill="none" stroke="currentColor" strokeWidth="4">
            <path d="M28 11V33Q28 44 16 44Q4 44 4 33V12Q4 3.500 11.500 3.500Q20 3.500 20 12V31Q20 35 16 35Q12 35 12 31V11" />
          </Clip>
          <svg width="48" height="44" viewBox="0 0 48 44" fill="none" stroke="currentColor" strokeWidth="4.400" strokeLinejoin="round">
            <path d="M4 8H14L19 3.500H29L34 8H44V39.500H4Z" />
            <circle cx="24" cy="24" r="8" />
          </svg>
        </Field>
        <MicButton aria-label="Record voice message">
          <svg width="34" height="46" viewBox="0 0 34 46" fill="none" stroke="#0b1014" strokeWidth="4" strokeLinecap="round">
            <rect x="12.500" y="3" width="9" height="23" rx="4.500" fill="#0b1014" />
            <path d="M4 22.500Q4 34.500 17 34.500Q30 34.500 30 22.500M17 35V42" />
          </svg>
        </MicButton>
      </Composer>
    </Screen>
  );
}
